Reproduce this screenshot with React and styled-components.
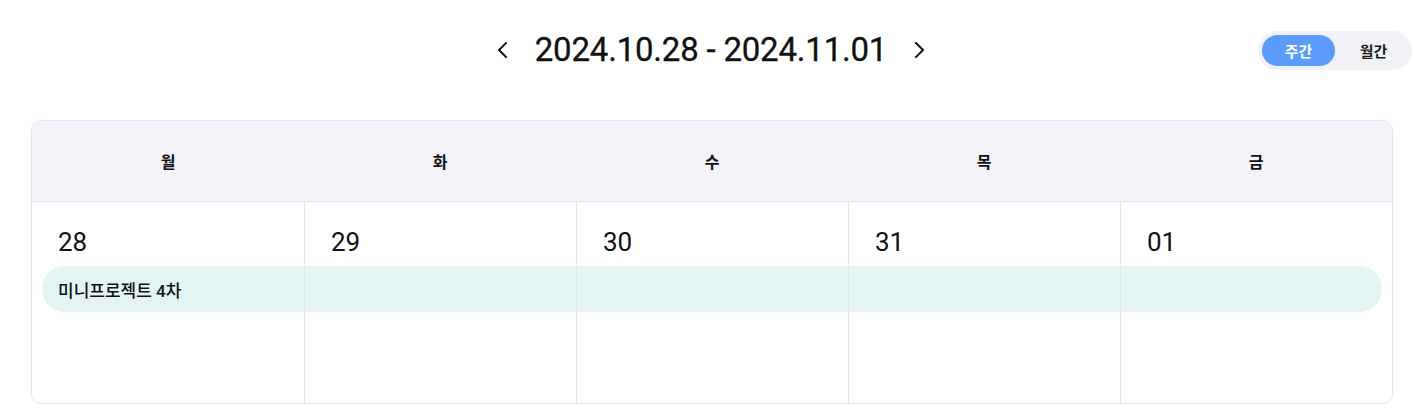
import styled, { createGlobalStyle } from "styled-components"

const GlobalStyle = createGlobalStyle`
  body {
    margin: 0;
    background: #ffffff;
    font-family: Roboto, "Noto Sans CJK KR", sans-serif;
    color: #111111;
  }
`

const Page = styled.div`
  width: 1428px;
  height: 418px;
  box-sizing: border-box;
  padding: 0 35px 0 31px;
`

const TopBar = styled.div`
  display: grid;
  grid-template-columns: 1fr auto 1fr;
  align-items: center;
  height: 100px;
  margin: 0 -19px 20px -21px;
`

const RangeNav = styled.div`
  grid-column: 2;
  display: flex;
  align-items: center;
  gap: 12px;
`

const ArrowButton = styled.button`
  width: 24px;
  height: 32px;
  padding: 0;
  border: none;
  background: none;
  display: flex;
  align-items: center;
  justify-content: center;
  color: #111111;
  cursor: pointer;
`

const RangeTitle = styled.h2`
  margin: 0 8px;
  font-family: Roboto, sans-serif;
  font-size: 33px;
  font-weight: 400;
  letter-spacing: -0.2px;
  line-height: 40px;
  -webkit-text-stroke: 0.3px #111111;
`

const ViewToggle = styled.div`
  grid-column: 3;
  justify-self: end;
  display: flex;
  gap: 4px;
  padding: 4px;
  background: #f0f2f8;
  border-radius: 20px;
`

const ToggleButton = styled.button`
  width: ${(props) => (props.$active ? "73px" : "69px")};
  height: 31px;
  border: none;
  border-radius: 16px;
  background: ${(props) => (props.$active ? "#5b9bf9" : "transparent")};
  color: ${(props) => (props.$active ? "#ffffff" : "#1a1a1a")};
  font-family: "Noto Sans CJK KR", sans-serif;
  font-size: 15px;
  font-weight: 600;
  cursor: pointer;
`

const Calendar = styled.div`
  border: 1px solid #e4e6ee;
  border-radius: 10px;
  overflow: hidden;
`

const DayHeader = styled.div`
  display: grid;
  grid-template-columns: repeat(5, 1fr);
  height: 80px;
  background: #f1f3f8;
  border-bottom: 1px solid #e4e6ee;
`

const DayName = styled.div`
  display: flex;
  align-items: center;
  justify-content: center;
  font-family: "Noto Sans CJK KR", sans-serif;
  font-size: 16px;
  font-weight: 600;
  color: #111111;
`

const WeekBody = styled.div`
  position: relative;
  display: grid;
  grid-template-columns: repeat(5, 1fr);
  height: 201px;
`

const DayCell = styled.div`
  position: relative;
  padding: 25px 26px;
  border-left: ${(props) => (props.$first ? "none" : "1px solid #e4e6ee")};
`

const DateNumber = styled.div`
  font-family: Roboto, sans-serif;
  font-size: 26px;
  line-height: 30px;
  color: #111111;
`

const EventBar = styled.div`
  position: absolute;
  top: 64px;
  left: 10px;
  right: 10px;
  height: 46px;
  display: flex;
  align-items: center;
  padding-left: 16px;
  border-radius: 23px;
  background: #e4f4f4;
  font-family: Roboto, "Noto Sans CJK KR", sans-serif;
  font-size: 17px;
  font-weight: 500;
  color: #111111;
`

const days = ["월", "화", "수", "목", "금"]
const dates = ["28", "29", "30", "31", "01"]

function Chevron({ dir }) {
  const d = dir === "left" ? "M9 1 L2 8 L9 15" : "M2 1 L9 8 L2 15"
  return (
    <svg width="11" height="16" viewBox="0 0 11 16" fill="none">
      <path d={d} stroke="currentColor" strokeWidth="2" strokeLinecap="square" />
    </svg>
  )
}

export default function App() {
  return (
    <>
      <GlobalStyle />
      <Page>
        <TopBar>
          <RangeNav>
            <ArrowButton aria-label="이전 주">
              <Chevron dir="left" />
            </ArrowButton>
            <RangeTitle>2024.10.28 - 2024.11.01</RangeTitle>
            <ArrowButton aria-label="다음 주">
              <Chevron dir="right" />
            </ArrowButton>
          </RangeNav>
          <ViewToggle>
            <ToggleButton $active>주간</ToggleButton>
            <ToggleButton>월간</ToggleButton>
          </ViewToggle>
        </TopBar>
        <Calendar>
          <DayHeader>
            {days.map((day) => (
              <DayName key={day}>{day}</DayName>
            ))}
          </DayHeader>
          <WeekBody>
            <EventBar>미니프로젝트 4차</EventBar>
            {dates.map((date, i) => (
              <DayCell key={date} $first={i === 0}>
                <DateNumber>{date}</DateNumber>
              </DayCell>
            ))}
          </WeekBody>
        </Calendar>
      </Page>
    </>
  )
}
